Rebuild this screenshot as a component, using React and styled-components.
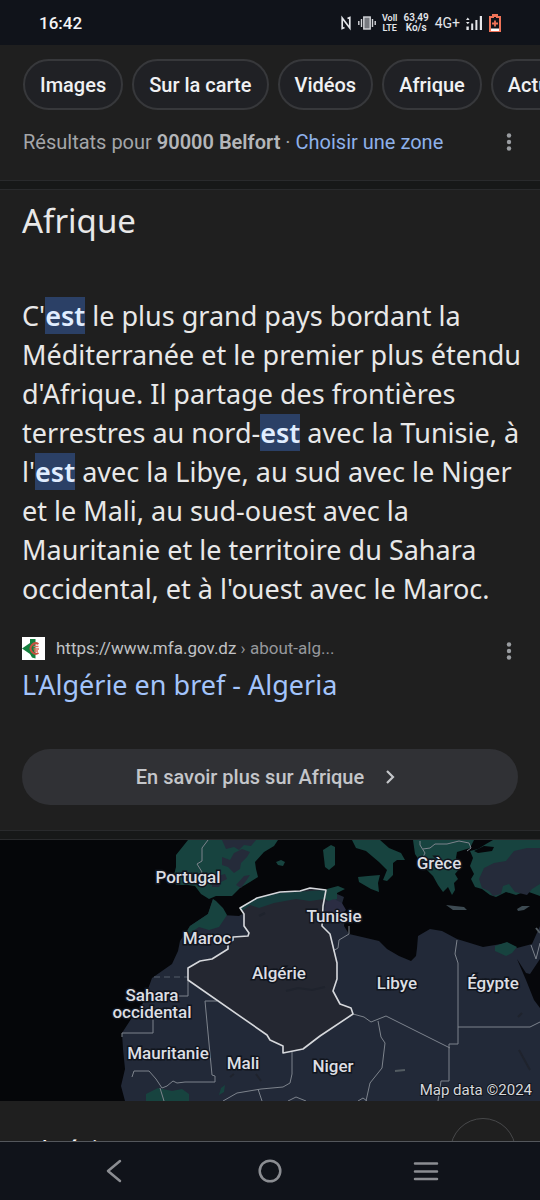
import React from 'react';
import styled, { createGlobalStyle } from 'styled-components';

const chips = ['Images', 'Sur la carte', 'Vidéos', 'Afrique', 'Actualités'];

const countries = [
    { name: 'Portugal', x: 188, y: 43 },
    { name: 'Grèce', x: 439, y: 29 },
    { name: 'Tunisie', x: 334, y: 82 },
    { name: 'Maroc', x: 207, y: 104 },
    { name: 'Algérie', x: 279, y: 139 },
    { name: 'Libye', x: 397, y: 149 },
    { name: 'Égypte', x: 493, y: 149 },
    { name: 'Sahara', x: 152, y: 161 },
    { name: 'occidental', x: 152, y: 178 },
    { name: 'Mauritanie', x: 168, y: 219 },
    { name: 'Mali', x: 243, y: 229 },
    { name: 'Niger', x: 333, y: 232 },
];

const StatusIcons = () => (
    <Indicators>
        <svg width="12" height="16" viewBox="0 0 12 16" fill="none" stroke="#e4e6ea" strokeWidth="1.7">
            <path d="M4.500 12.500L2.200 13.500V3L9.800 13V2.500L7.500 3.500" />
        </svg>
        <svg width="18" height="14" viewBox="0 0 18 14" stroke="#d4d6da">
            <rect x="5.800" y="1" width="6.400" height="12" fill="#777a80" strokeWidth="1.400" />
            <path d="M3.500 3v8M14.500 3v8M.8 5v4M17.200 5v4" strokeWidth="1.400" />
        </svg>
        <Stacked>
            <span>Voll</span>
            <span>LTE</span>
        </Stacked>
        <Stacked $wide>
            <span>63,49</span>
            <span>Ko/s</span>
        </Stacked>
        <Network>4G+</Network>
        <svg width="17" height="16" viewBox="0 0 17 16" fill="#e4e6ea">
            <path d="M0 5l1.800-2.600L3.600 5zM0 7h3.600L1.800 9.200zM.4 11.500h2.400v3.500H.4zM5.200 8.500h2v6.500h-2zM9.400 5h2v10h-2zM13.800 1h2.200v14h-2.200z" />
        </svg>
        <svg width="12" height="18" viewBox="0 0 12 18">
            <path d="M4 1h4v2h3v14H1V3h3z" fill="#10131a" stroke="#ee7358" strokeWidth="2" />
            <path d="M4 1h4v2H4z" fill="#ee7358" />
            <path d="M6 6.500v6M3 9.500h6" stroke="#ee7358" strokeWidth="1.800" />
            <path d="M2 14.500h8V17H2z" fill="#fff" />
        </svg>
    </Indicators>
);

const Dots = ({ label }) => (
    <DotsButton aria-label={label}>
        <svg width="6" height="18" viewBox="0 0 6 18" fill="#9a9da1">
            <circle cx="3" cy="2.500" r="2.200" />
            <circle cx="3" cy="9" r="2.200" />
            <circle cx="3" cy="15.500" r="2.200" />
        </svg>
    </DotsButton>
);

const Favicon = () => (
    <svg width="23" height="23" viewBox="0 0 23 23">
        <rect width="23" height="23" fill="#fff" />
        <path d="M0 11.500L8 6V2h5.500v19.500L10 20.500 8 17z" fill="#15803f" />
        <path d="M16.500 7A5.200 5.200 0 1 0 16.500 16" fill="none" stroke="#c9503f" strokeWidth="2" />
        <path d="M11.500 9.500h5M11.500 12h5.500M12 14h4" stroke="#e0705f" strokeWidth="1.300" />
    </svg>
);

const AfricaMap = () => (
    <MapImage viewBox="0 0 540 261" preserveAspectRatio="xMidYMid slice" role="img">
        <rect width="540" height="261" fill="#050609" />
        {/* Europe */}
        <g fill="#17433f">
            <path d="M188 0h90l-4 6-10 6-9 10 1 7 2 8-8 5-10 6-8 8-16 0-7 3-8-5-6-8-7-1-12 0-2-10 2-8 0-12z" />
            <path d="M323 10l8-5 4 2 0 18-6 5-4-3z" />
            <path d="M352 0h28l9 8 12 5 4 7-8 0-4 3 0 12-6 6-4-1 4-10-8-8-13-11-10-3z" />
            <path d="M358 37l10-1 12-1-2 8 1 9-8-3-12-7z" />
            <path d="M413 0h61l-4 8-13 4-1 6 4 10-5 6 3 5-4 4 1 7-3 5-4-8-5 5-5-7-5-9-5-5-7-8-6-9z" />
            <path d="M493 0h47v56l-14-5-10 4-10-3-10 5-6-2-8-6-7-2-4-8 3-5-4-8 3-8-3-7 8-2 8-5z" />
            <path d="M276 22l5-2 4 2-2 4-5-1z" />
        </g>
        <path d="M474 11l10-5 10 1-2 4-14 2z" fill="#050609" />
        <g fill="#252b3a">
            <path d="M222 17l8 3 4-7 8-4 8 3-3 5-6 6-1 6-6 4-6-6-6-2zM222 0h34l-5 6-7-1-5 5-5-3-8 2zM212 42l5-6 8-2 2 5-6 3-2 5-7 0zM236 45l8-9 6-1-4 6-5 7z" />
            <path d="M484 28l10-5 12-2 8-10 13-3h13v36l-8 5-5 6-12-3-6-8-6 2-2 8-8 2-4-5-7-3-3-9z" />
            <path d="M446 65l18 2 3 3-14 0zM517 69l5-3 8 0-6 4-6 1z" fill="#3d4a52" />
        </g>
        {/* Africa */}
        <path
            d="M213 59l-5 15-18 12-10 15-2 10-6 13-20 14-9 25-10 13-11 17 1 16 2 20-4 17 4 15h415V86l-8 18-15 4-10-5-24 4-26-8-15-8-12-2-12 7-1 12-1 8-5 5-12-5-12-7-8-8-17-4-13-3-5-8 1-9-4-10 3-10-7-3-11 3-17-1-10 3-20 1-23 6-17 10-17-1-8-6z"
            fill="#222938"
        />
        <g fill="#17433f">
            <path d="M213 59l3 2 7 7 4 7-8 12-10 3-10-3-9 6-6 4 6-11 18-12z" />
            <path d="M327 49l11-3 7 3-8 4 0 6-7 3-5-3zM495 106l12-4 10 5-5 6-6 3-11-5zM146 254l12-6 14 3 10-2 7 5 0 7h-43zM221 248l4-3-1 7-5 3z" />
        </g>
        <path d="M326 62l8-3 8 4 4 7-6 6-6 4-10-4z" fill="#2b2d43" />
        <path d="M240 68l4 6v12l5 7-1 3-15 1-5 6v6l-16 10-12 2-12 7v12l79 55 3 5 13 6v7l20-4 17-13 33-22-2-6-11-4-7-13 4-12V123l-7-29-8-8 1-20 3-16-16-2-10 3-20 1-23 6z" fill="#242731" />
        <path d="M240 68l17-10 23-5 46-3-2 9-14 2-14-2-22 4-15 5-9-3-8 6z" fill="#163c3d" />
        <path d="M517 119l9 14 4 1 10-15v49l-6-8-8-20z" fill="#06070b" />
        <path d="M286 151l12-3 14 2 13-3M259 76l6-3M234 234l-4 3M256 234l5 7M518 177l4-4M519 210l11 20" stroke="#1f232d" strokeWidth="2" fill="none" />
        <g fill="none" stroke="#7d838c" strokeWidth="1">
            <path d="M208 0l-6 8 0 13-5 3 5 8-3 5M420 1l0 4 5 8-3 6M423 9l7-1 5-4 12 0 12-3 10 2 2 5-4 3M349 86v8l-10 6-1 8-5 3M457 100l-2 14 3 9v81h-9v37h-8l-3 20M458 187h72l10-5M353 174l11 3 7 5 15-6 64 32M378 181l3 16 4 6-3 25-12 15-4 18M292 212v22l-2 9-7 4-22 2-24 4-14 8M188 140v16h-10M160 168l-7 5v20h-31v4M217 161h-12l7 74 3 1v6h-30l-8 1-4-2-6 5-5 2-6-9-7-8-15 0-2 6M160 248l4 13M258 249l4 12M288 261l8-4 10 4M358 261l5-3 4 3M531 105l5 14 4-16" />
            <path d="M154 137h34" strokeDasharray="6 4" stroke="#555e6b" />
            <path d="M536 88l4 5M395 231l10-1" stroke="#535c62" strokeWidth="2" />
        </g>
        <path d="M240 68l4 6v12l5 7-1 3-15 1v3l-5 3v6l-16 10-12 2-12 7v12l79 55 3 5 13 6v7l20-4 17-13 33-22-2-6-11-4-7-13 4-12V123l-7-29-8-8 1-20 3-16-16-2-10 3-20 1-23 6z" fill="none" stroke="#d6d8dc" strokeWidth="1.600" strokeLinejoin="round" />
        {countries.map((country) => (
            <CountryName key={country.name} x={country.x} y={country.y}>{country.name}</CountryName>
        ))}
        <Credit x="532" y="255">Map data ©2024</Credit>
    </MapImage>
);

const App = () => (
    <Page>
        <GlobalStyle />
        <StatusBar>
            <Clock>16:42</Clock>
            <StatusIcons />
        </StatusBar>
        <Filters>
            {chips.map((chip) => <Chip key={chip}>{chip}</Chip>)}
        </Filters>
        <Content>
            <Location>
                <p>Résultats pour <b>90000 Belfort</b> · <a href="#zone">Choisir une zone</a></p>
                <Dots label="Options de zone" />
            </Location>
            <Divider />
            <Answer>
                <h1>Afrique</h1>
                <Excerpt>
                    C'<mark>est</mark> le plus grand pays bordant la<br />
                    Méditerranée et le premier plus étendu<br />
                    d'Afrique. Il partage des frontières<br />
                    terrestres au nord-<mark>est</mark> avec la Tunisie, à<br />
                    l'<mark>est</mark> avec la Libye, au sud avec le Niger<br />
                    et le Mali, au sud-ouest avec la<br />
                    Mauritanie et le territoire du Sahara<br />
                    occidental, et à l'ouest avec le Maroc.
                </Excerpt>
                <Source>
                    <Favicon />
                    <Url>https://www.mfa.gov.dz <span>› about-alg...</span></Url>
                    <Dots label="À propos de ce résultat" />
                </Source>
                <ResultLink href="#algerie">L'Algérie en bref - Algeria</ResultLink>
                <MoreButton>
                    En savoir plus sur Afrique
                    <svg width="20" height="16" viewBox="0 0 20 16" fill="none" stroke="#c4c6ca" strokeWidth="2.200">
                        <path d="M3 2l6 6-6 6" />
                    </svg>
                </MoreButton>
            </Answer>
            <Divider />
            <AfricaMap />
            <NextCard>
                <h2>Algérie</h2>
                <RoundButton aria-label="Partager" />
            </NextCard>
        </Content>
        <NavBar>
            <NavButton aria-label="Retour">
                <svg width="26" height="26" viewBox="0 0 26 26"><path d="M19 3L7 13l12 10" /></svg>
            </NavButton>
            <NavButton aria-label="Accueil">
                <svg width="26" height="26" viewBox="0 0 26 26"><circle cx="13" cy="13" r="10.300" /></svg>
            </NavButton>
            <NavButton aria-label="Applications récentes">
                <svg width="26" height="26" viewBox="0 0 26 26"><path d="M2 5.500h22M2 13.500h22M2 21h22" /></svg>
            </NavButton>
        </NavBar>
    </Page>
);

const GlobalStyle = createGlobalStyle`
* {
    box-sizing: border-box;
}

body {
    margin: 0;
    background-color: #1f1f1f;
}

body, button {
    font-family: Roboto, sans-serif;
}

h1, h2, p {
    margin: 0;
    font-weight: 400;
}

a {
    color: #a3c4fb;
    text-decoration: none;
}

svg {
    display: block;
    flex: none;
}
`;

const Page = styled.div`
    display: flex;
    flex-direction: column;
    height: 100vh;
    overflow: hidden;
    color: #e8e8e8;
`;

const StatusBar = styled.header`
    display: flex;
    flex: none;
    align-items: center;
    justify-content: space-between;
    height: 45px;
    padding: 0 39px;
    background-color: #10131a;
`;

const Clock = styled.time`
    color: #f4f5f7;
    font-size: 17px;
    font-weight: 500;
`;

const Indicators = styled.div`
    display: flex;
    align-items: center;
    gap: 6px;
`;

const Stacked = styled.div`
    display: flex;
    flex-direction: column;
    align-items: center;
    width: ${({ $wide }) => ($wide ? '25px' : '16px')};
    color: #e4e6ea;
    font-size: ${({ $wide }) => ($wide ? '10px' : '9px')};
    font-weight: 600;
    line-height: 10px;
`;

const Network = styled.span`
    color: #e4e6ea;
    font-size: 14px;
`;

const Filters = styled.nav`
    display: flex;
    flex: none;
    gap: 9px;
    padding: 14px 23px 16px;
    overflow: hidden;
    background-color: #1f1f1f;
`;

const Chip = styled.button`
    flex: none;
    height: 51px;
    padding: 0 15px;
    border: 2px solid #37383b;
    border-radius: 26px;
    background-color: #202125;
    color: #f0f1f3;
    font-size: 20px;
    font-weight: 500;
`;

const Content = styled.main`
    flex: 1;
    min-height: 0;
    overflow: hidden;
`;

const Location = styled.div`
    display: flex;
    align-items: flex-start;
    justify-content: space-between;
    height: 54px;
    padding: 2px 22px 0 23px;
    color: #a4a6a9;
    font-size: 20px;
    line-height: 28px;

    b {
        color: #b4b6b9;
        font-weight: 600;
    }

    a {
        color: #8eb1ea;
    }
`;

const DotsButton = styled.button`
    display: flex;
    align-items: center;
    justify-content: center;
    width: 18px;
    height: 28px;
    padding: 0;
    border: 0;
    background: none;
`;

const Divider = styled.div`
    height: 10px;
    border: 1px solid #292a2c;
    border-width: 1px 0;
    background-color: #171818;
`;

const Answer = styled.section`
    display: flex;
    flex-direction: column;
    padding: 11px 22px 25px;

    h1 {
        font-family: "Noto Sans", sans-serif;
        font-size: 33px;
        line-height: 40px;
    }
`;

const Excerpt = styled.p`
    margin-top: 55px;
    font-family: "Noto Sans", sans-serif;
    font-size: 27px;
    line-height: 39px;
    white-space: nowrap;

    mark {
        background-color: #2b4066;
        color: #e0edff;
        font-weight: 600;
    }
`;

const Source = styled.div`
    display: flex;
    align-items: flex-start;
    height: 28px;
    margin-top: 29px;
`;

const Url = styled.cite`
    flex: 1;
    margin-left: 11px;
    color: #c0c2c5;
    font-size: 17px;
    font-style: normal;
    line-height: 22px;

    span {
        color: #96989c;
    }
`;

const ResultLink = styled.a`
    margin-top: 2px;
    font-family: "Noto Sans", sans-serif;
    font-size: 27px;
    line-height: 36px;
`;

const MoreButton = styled.button`
    display: flex;
    align-items: center;
    justify-content: center;
    gap: 20px;
    height: 56px;
    margin-top: 46px;
    border: 0;
    border-radius: 28px;
    background-color: #303135;
    color: #c4c6ca;
    font-size: 20px;
    font-weight: 500;
`;

const MapImage = styled.svg`
    width: 100%;
    height: 261px;
`;

const CountryName = styled.text`
    fill: #dcdee3;
    stroke: #11151d;
    stroke-width: 3px;
    paint-order: stroke;
    font-size: 17px;
    font-weight: 500;
    text-anchor: middle;
`;

const Credit = styled.text`
    fill: #d6d8dc;
    stroke: #11151d;
    stroke-width: 2px;
    paint-order: stroke;
    font-size: 15px;
    text-anchor: end;
`;

const NextCard = styled.section`
    display: flex;
    align-items: flex-start;
    justify-content: space-between;
    padding: 17px 24px 0;

    h2 {
        margin-top: 15px;
        color: #fff;
        font-family: "Noto Sans", sans-serif;
        font-size: 27px;
        line-height: 36px;
    }
`;

const RoundButton = styled.button`
    width: 66px;
    height: 66px;
    border: 1px solid #47484a;
    border-radius: 50%;
    background: none;
`;

const NavBar = styled.footer`
    display: grid;
    flex: none;
    grid-template-columns: repeat(3, 1fr);
    height: 59px;
    padding: 0 36px;
    border-top: 1px solid #54575c;
    background-color: #10131a;
`;

const NavButton = styled.button`
    display: flex;
    align-items: center;
    justify-content: center;
    padding: 0;
    border: 0;
    background: none;

    svg {
        fill: none;
        stroke: #8b8d92;
        stroke-width: 2.5px;
        stroke-linecap: round;
        stroke-linejoin: round;
    }
`;

export default App;
